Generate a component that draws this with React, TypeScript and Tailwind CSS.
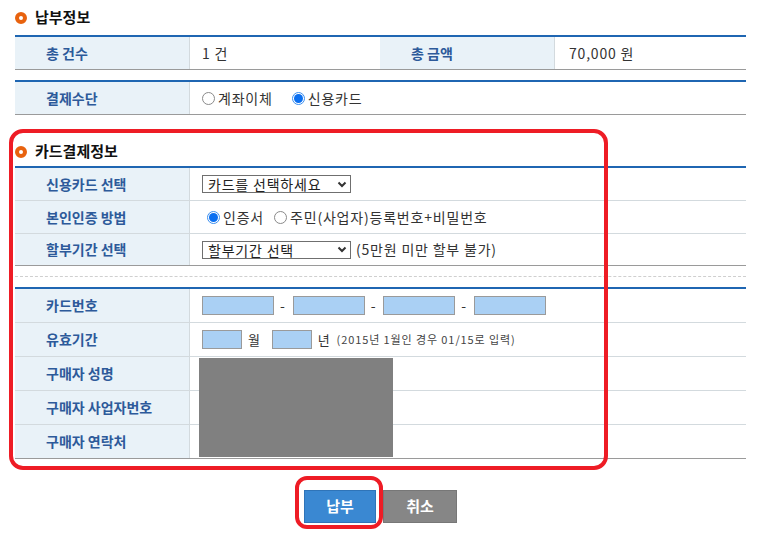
import React from "react";

const font = { fontFamily: '"Noto Sans CJK KR", "Noto Sans", sans-serif' };

function Radio({ checked }: { checked?: boolean }) {
  return checked ? (
    <span className="inline-flex h-[13px] w-[13px] items-center justify-center rounded-full border border-[#3b8ff0] bg-white">
      <span className="h-[9px] w-[9px] rounded-full bg-[#0a6ff0]" />
    </span>
  ) : (
    <span className="inline-block h-[13px] w-[13px] rounded-full border border-[#8a8a8a] bg-white" />
  );
}

function Select({ text }: { text: string }) {
  return (
    <div className="flex h-[18px] w-[149px] items-center justify-between border border-[#6f6f6f] bg-white pl-[5px] pr-[3px] text-[14px] leading-none tracking-[0.8px] text-[#222]">
      <span>{text}</span>
      <svg width="10" height="7" viewBox="0 0 10 7">
        <path d="M1.5 1.5 L5 5 L8.5 1.5" fill="none" stroke="#333" strokeWidth="2" />
      </svg>
    </div>
  );
}

function Label({ children }: { children: React.ReactNode }) {
  return (
    <div className="flex w-[175px] shrink-0 items-center border-r border-[#d3dade] bg-[#e9f2f8] pl-[31px] text-[14px] font-bold text-[#2d5a9a]">
      {children}
    </div>
  );
}

function Row({
  label,
  children,
  last,
  h = "h-[34px]",
}: {
  label: string;
  children?: React.ReactNode;
  last?: boolean;
  h?: string;
}) {
  return (
    <div className={`flex ${h} border-b ${last ? "border-[#9a9a9a]" : "border-[#d3dade]"}`}>
      <Label>{label}</Label>
      <div className="flex flex-1 items-center pl-[12px] text-[14px] tracking-[0.8px] text-[#333]">{children}</div>
    </div>
  );
}

function Heading({ children }: { children: React.ReactNode }) {
  return (
    <div className="flex items-center gap-[8px] text-[15px] font-bold text-[#111]">
      <span className="h-[12px] w-[12px] rounded-full border-[4px] border-[#e8620e] bg-white" />
      {children}
    </div>
  );
}

function CardInput({ w }: { w: string }) {
  return <span className={`inline-block h-[19px] ${w} border border-[#9a9a9a] bg-[#aad0f4]`} />;
}

function Dash() {
  return <span className="ml-[6px] mr-[7px] text-[#333]">-</span>;
}

export default function App() {
  return (
    <div className="relative h-[535px] w-[761px] bg-white" style={font}>
      <div className="px-[15px]">
        <div className="flex h-[35px] items-center">
          <Heading>납부정보</Heading>
        </div>

        <div className="border-t-2 border-[#1f66b2]">
          <div className="flex h-[33px] border-b border-[#9a9a9a]">
            <Label>총 건수</Label>
            <div className="flex w-[190px] items-center pl-[12px] text-[14px] tracking-[0.8px] text-[#333]">1 건</div>
            <Label>총 금액</Label>
            <div className="flex flex-1 items-center pl-[14px] text-[14px] tracking-[0.8px] text-[#333]">70,000 원</div>
          </div>
        </div>

        <div className="mt-[10px] border-t-2 border-[#1f66b2]">
          <Row label="결제수단" last h="h-[33px]">
            <div className="flex items-center gap-[3px]">
              <Radio />
              <span>계좌이체</span>
            </div>
            <div className="ml-[19px] flex items-center gap-[3px]">
              <Radio checked />
              <span>신용카드</span>
            </div>
          </Row>
        </div>

        <div className="mt-[22px] flex h-[29px] items-center">
          <Heading>카드결제정보</Heading>
        </div>

        <div className="border-t-2 border-[#1f66b2]">
          <Row label="신용카드 선택" h="h-[33px]">
            <Select text="카드를 선택하세요" />
          </Row>
          <Row label="본인인증 방법" h="h-[33px]">
            <div className="ml-[5px] flex items-center gap-[3px]">
              <Radio checked />
              <span>인증서</span>
            </div>
            <div className="ml-[10px] flex items-center gap-[3px]">
              <Radio />
              <span>주민(사업자)등록번호+비밀번호</span>
            </div>
          </Row>
          <Row label="할부기간 선택" h="h-[32px]" last>
            <Select text="할부기간 선택" />
            <span className="ml-[5px]">(5만원 미만 할부 불가)</span>
          </Row>
        </div>

        <div className="mt-[10px] border-t border-dashed border-[#cfcfcf]" />

        <div className="relative mt-[10px] border-t-2 border-[#1f66b2]">
          <Row label="카드번호">
            <CardInput w="w-[72px]" />
            <Dash />
            <CardInput w="w-[72px]" />
            <Dash />
            <CardInput w="w-[72px]" />
            <Dash />
            <CardInput w="w-[72px]" />
          </Row>
          <Row label="유효기간">
            <CardInput w="w-[40px]" />
            <span className="ml-[6px] mr-[11px] text-[13px]">월</span>
            <CardInput w="w-[40px]" />
            <span className="ml-[6px] text-[13px]">년</span>
            <span className="ml-[6px] text-[11px] tracking-[0.9px] text-[#444]">(2015년 1월인 경우 01/15로 입력)</span>
          </Row>
          <Row label="구매자 성명" />
          <Row label="구매자 사업자번호" />
          <Row label="구매자 연락처" last />
          <div className="absolute left-[184px] top-[69px] h-[99px] w-[194px] bg-[#808080]" />
        </div>

        <div className="mt-[31px] flex justify-center gap-[7px]">
          <button className="h-[33px] w-[72px] border border-[#2f74b8] bg-[#3a88d2] text-[15px] font-bold text-white">
            납부
          </button>
          <button className="h-[33px] w-[74px] border border-[#777] bg-[#868686] text-[15px] font-bold text-white">
            취소
          </button>
        </div>
      </div>

      <div className="pointer-events-none absolute left-[9px] top-[129px] h-[341px] w-[599px] rounded-[14px] border-[4px] border-[#ee1c25]" />
      <div className="pointer-events-none absolute left-[295px] top-[476px] h-[53px] w-[88px] rounded-[12px] border-[4px] border-[#ee1c25]" />
    </div>
  );
}
